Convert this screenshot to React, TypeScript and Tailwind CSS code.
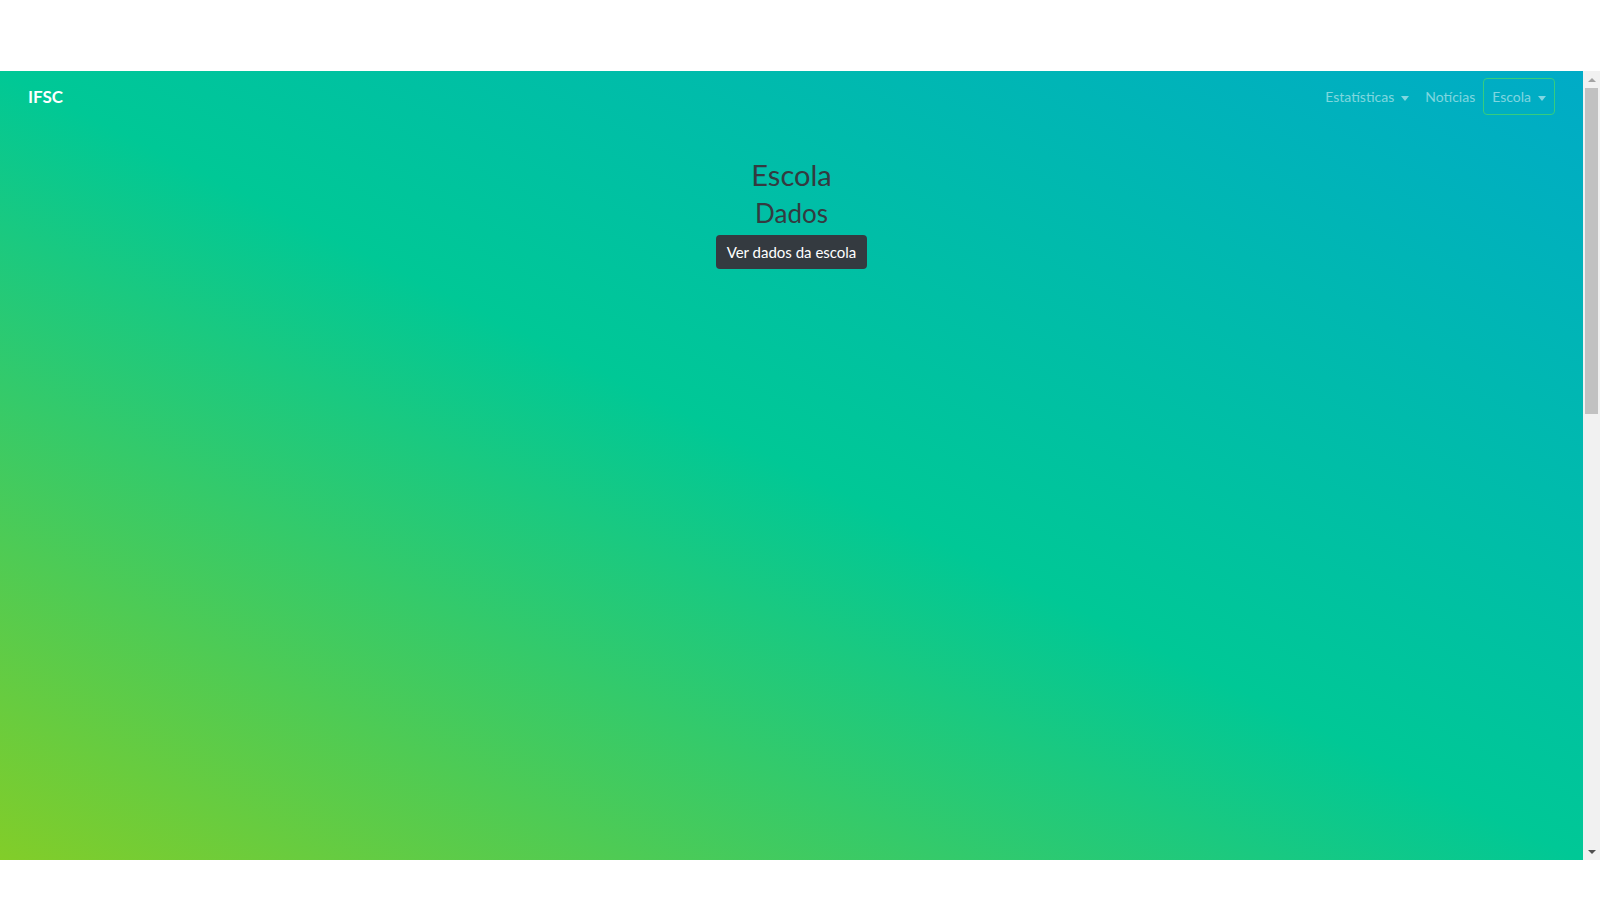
import React from 'react';

const Caret: React.FC = () => (
  <span className="ml-[7px] inline-block h-0 w-0 border-x-[4px] border-t-[5px] border-x-transparent border-t-current align-middle" />
);

const Scrollbar: React.FC = () => (
  <div className="flex w-[17px] flex-col items-center bg-[#f1f1f1]">
    {/* up arrow */}
    <div className="flex h-[17px] w-full items-center justify-center">
      <span className="h-0 w-0 border-x-[4px] border-b-[4px] border-x-transparent border-b-[#a3a3a3]" />
    </div>
    <div className="h-[326px] w-[13px] bg-[#c1c1c1]" />
    <div className="flex-1" />
    {/* down arrow */}
    <div className="flex h-[17px] w-full items-center justify-center">
      <span className="h-0 w-0 border-x-[4px] border-t-[4px] border-x-transparent border-t-[#505050]" />
    </div>
  </div>
);

const App: React.FC = () => {
  return (
    <div
      className="h-[900px] w-full bg-white pt-[71px]"
      style={{ fontFamily: 'Lato, "Liberation Sans", sans-serif' }}
    >
      <div className="flex h-[789px] w-full">
        {/* Page body with gradient */}
        <div className="flex-1 bg-[linear-gradient(to_top_right,#82cd29_0%,#00c896_50%,#00abc7_100%)]">
          {/* Navbar */}
          <nav className="flex items-center justify-between px-[28px] py-[7px]">
            <a className="text-[17px] font-bold text-white">IFSC</a>
            <ul className="flex items-center text-[14px] text-white/50">
              <li className="px-2 leading-[37px]">
                Estatísticas
                <Caret />
              </li>
              <li className="px-2 leading-[37px]">Notícias</li>
              <li className="h-[37px] rounded border border-[#35cd7f] px-2 leading-[35px]">
                Escola
                <Caret />
              </li>
            </ul>
          </nav>

          {/* Content */}
          <main className="flex flex-col items-center pt-[35px] text-[#343a40]">
            <h3 className="text-[29px] leading-[35px]">Escola</h3>
            <h4 className="mt-[6px] text-[26px] leading-[30px]">Dados</h4>
            <button className="mt-[7px] h-[34px] w-[151px] rounded bg-[#343a40] text-[15px] text-white">
              Ver dados da escola
            </button>
          </main>
        </div>
        <Scrollbar />
      </div>
    </div>
  );
};

export default App;
